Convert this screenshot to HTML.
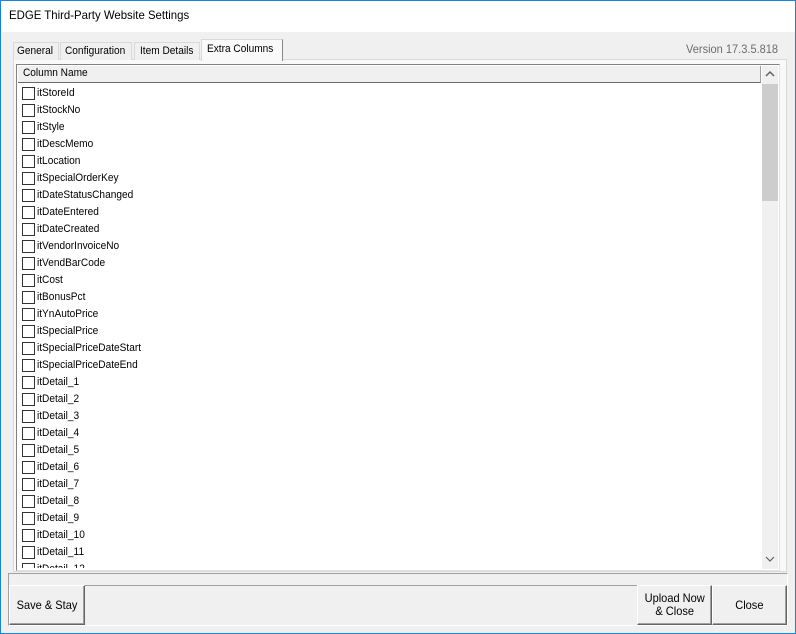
<!DOCTYPE html>
<html><head><style>
*{margin:0;padding:0;box-sizing:border-box}
body{width:796px;height:634px;background:#f0f0f0;font-family:"Liberation Sans",sans-serif;font-size:11px;color:#000;position:relative;overflow:hidden}
.a{position:absolute}
.n{display:inline-block;transform:scaleX(0.92);transform-origin:left center;white-space:nowrap}
.row{position:absolute;left:22px;height:17px;line-height:17px}
.cb{position:absolute;left:0;top:2px;width:13px;height:13px;border:1px solid #333;background:#fff}
.row span{position:absolute;left:15px;top:0}
.btn{position:absolute;background:#f0f0f0;border-top:1px solid #fff;border-left:1px solid #fff;border-right:1px solid #646464;border-bottom:1px solid #646464;box-shadow:inset -1px -1px 0 #a0a0a0;text-align:center;font-size:12px}
</style></head><body>
<div class="a" style="left:0;top:0;width:796px;height:634px;border:1px solid #1883d7;border-top:1px solid #1883d7"></div>
<div class="a" style="left:1px;top:1px;width:794px;height:31px;background:#fff"></div>
<div class="a" style="left:9px;top:8px;font-size:12px"><span class="n" style="transform:scaleX(0.95)">EDGE Third-Party Website Settings</span></div>
<div class="a" style="left:13px;top:59px;width:774px;height:513px;border:1px solid #d9d9d9;background:#f9f9f9"></div>
<div class="a" style="left:13px;top:42px;height:18px;width:46px;border:1px solid #d9d9d9;border-bottom:none;background:#f0f0f0;padding:2px 0 0 3px"><span class="n">General</span></div>
<div class="a" style="left:60px;top:42px;height:18px;width:72px;border:1px solid #d9d9d9;border-bottom:none;background:#f0f0f0;padding:2px 0 0 4px"><span class="n">Configuration</span></div>
<div class="a" style="left:134px;top:42px;height:18px;width:66px;border:1px solid #d9d9d9;border-bottom:none;background:#f0f0f0;padding:2px 0 0 5px"><span class="n">Item Details</span></div>
<div class="a" style="left:201px;top:39px;height:22px;width:82px;border:1px solid #d9d9d9;border-right:1px solid #888;border-bottom:none;background:#f9f9f9;padding:3px 0 0 5px"><span class="n">Extra Columns</span></div>
<div class="a" style="left:686px;top:42px;color:#6d6d6d;font-size:12px"><span class="n">Version 17.3.5.818</span></div>
<div class="a" style="left:16px;top:64px;width:764px;height:507px;border:1px solid #828282;border-right-color:#e3e3e3;border-bottom-color:#e3e3e3;background:#fff"></div>
<div class="a" style="left:18px;top:66px;width:743px;height:17px;background:#f0f0f0;border-bottom:1px solid #696969;border-right:1px solid #a0a0a0;padding:1px 0 0 5px"><span class="n">Column Name</span></div>
<div class="a" style="left:762px;top:66px;width:16px;height:503px;background:#f0f0f0"></div>
<div class="a" style="left:762px;top:84px;width:16px;height:117px;background:#cdcdcd"></div>
<svg class="a" style="left:765px;top:70px" width="10" height="8"><path d="M1 6 L5 2 L9 6" stroke="#606060" stroke-width="1.5" fill="none"/></svg>
<svg class="a" style="left:765px;top:555px" width="10" height="8"><path d="M1 2 L5 6 L9 2" stroke="#606060" stroke-width="1.2" fill="none"/></svg>
<div class="a" style="left:18px;top:84px;width:743px;height:484px;overflow:hidden">
<div style="position:relative">
<div class="row" style="left:4px;top:1px"><i class="cb"></i><span class="n">itStoreId</span></div>
<div class="row" style="left:4px;top:18px"><i class="cb"></i><span class="n">itStockNo</span></div>
<div class="row" style="left:4px;top:35px"><i class="cb"></i><span class="n">itStyle</span></div>
<div class="row" style="left:4px;top:52px"><i class="cb"></i><span class="n">itDescMemo</span></div>
<div class="row" style="left:4px;top:69px"><i class="cb"></i><span class="n">itLocation</span></div>
<div class="row" style="left:4px;top:86px"><i class="cb"></i><span class="n">itSpecialOrderKey</span></div>
<div class="row" style="left:4px;top:103px"><i class="cb"></i><span class="n">itDateStatusChanged</span></div>
<div class="row" style="left:4px;top:120px"><i class="cb"></i><span class="n">itDateEntered</span></div>
<div class="row" style="left:4px;top:137px"><i class="cb"></i><span class="n">itDateCreated</span></div>
<div class="row" style="left:4px;top:154px"><i class="cb"></i><span class="n">itVendorInvoiceNo</span></div>
<div class="row" style="left:4px;top:171px"><i class="cb"></i><span class="n">itVendBarCode</span></div>
<div class="row" style="left:4px;top:188px"><i class="cb"></i><span class="n">itCost</span></div>
<div class="row" style="left:4px;top:205px"><i class="cb"></i><span class="n">itBonusPct</span></div>
<div class="row" style="left:4px;top:222px"><i class="cb"></i><span class="n">itYnAutoPrice</span></div>
<div class="row" style="left:4px;top:239px"><i class="cb"></i><span class="n">itSpecialPrice</span></div>
<div class="row" style="left:4px;top:256px"><i class="cb"></i><span class="n">itSpecialPriceDateStart</span></div>
<div class="row" style="left:4px;top:273px"><i class="cb"></i><span class="n">itSpecialPriceDateEnd</span></div>
<div class="row" style="left:4px;top:290px"><i class="cb"></i><span class="n">itDetail_1</span></div>
<div class="row" style="left:4px;top:307px"><i class="cb"></i><span class="n">itDetail_2</span></div>
<div class="row" style="left:4px;top:324px"><i class="cb"></i><span class="n">itDetail_3</span></div>
<div class="row" style="left:4px;top:341px"><i class="cb"></i><span class="n">itDetail_4</span></div>
<div class="row" style="left:4px;top:358px"><i class="cb"></i><span class="n">itDetail_5</span></div>
<div class="row" style="left:4px;top:375px"><i class="cb"></i><span class="n">itDetail_6</span></div>
<div class="row" style="left:4px;top:392px"><i class="cb"></i><span class="n">itDetail_7</span></div>
<div class="row" style="left:4px;top:409px"><i class="cb"></i><span class="n">itDetail_8</span></div>
<div class="row" style="left:4px;top:426px"><i class="cb"></i><span class="n">itDetail_9</span></div>
<div class="row" style="left:4px;top:443px"><i class="cb"></i><span class="n">itDetail_10</span></div>
<div class="row" style="left:4px;top:460px"><i class="cb"></i><span class="n">itDetail_11</span></div>
<div class="row" style="left:4px;top:477px"><i class="cb"></i><span class="n">itDetail_12</span></div>
</div></div>
<div class="a" style="left:8px;top:573px;width:780px;height:53px;border:1px solid #a0a0a0;border-right-color:#fff;border-bottom-color:#fff"></div>
<div class="a" style="left:84px;top:585px;width:553px;height:40px;border-top:1px solid #a0a0a0;border-left:1px solid #a0a0a0"></div>
<div class="btn" style="left:9px;top:585px;width:76px;height:40px;line-height:38px"><span class="n" style="transform-origin:center">Save &amp; Stay</span></div>
<div class="btn" style="left:637px;top:585px;width:75px;height:40px;line-height:13px;padding-top:6px"><span class="n" style="transform-origin:center">Upload Now<br>&amp; Close</span></div>
<div class="btn" style="left:712px;top:585px;width:75px;height:40px;line-height:38px"><span class="n" style="transform-origin:center">Close</span></div>
</body></html>
